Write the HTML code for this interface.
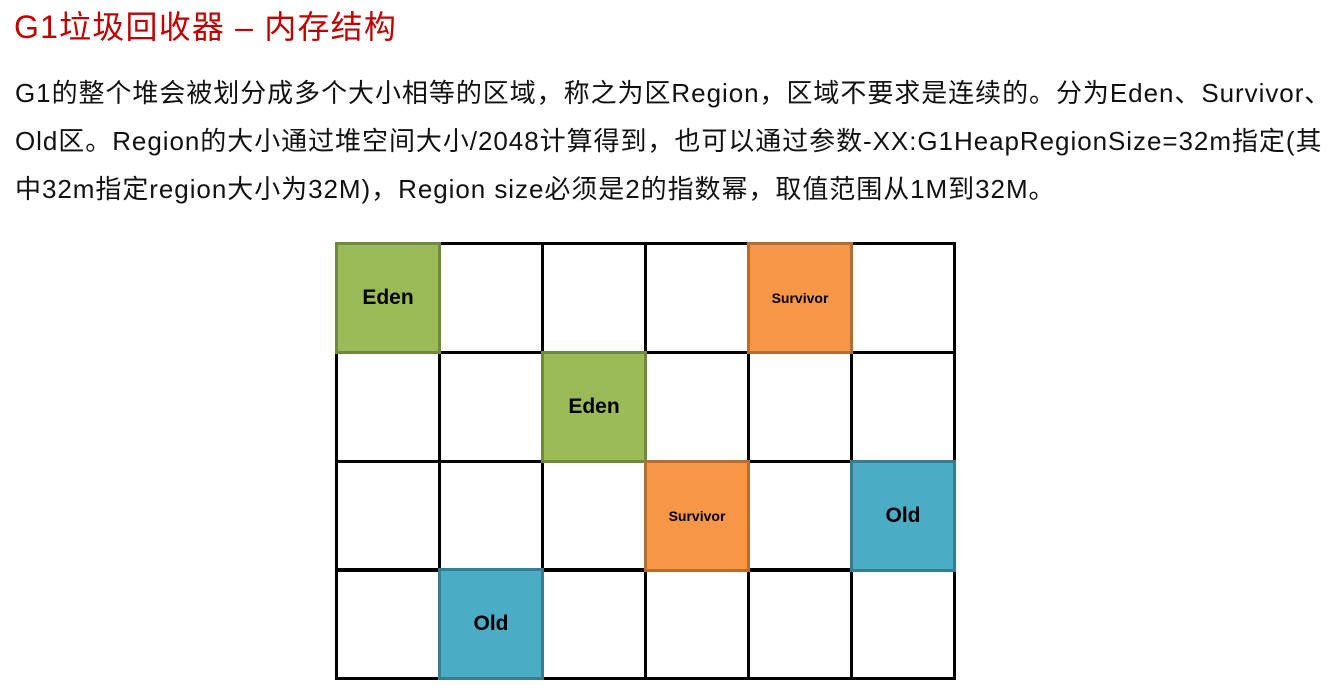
<!DOCTYPE html>
<html><head><meta charset="utf-8"><style>
body{margin:0;width:1341px;height:700px;background:#fff;position:relative;overflow:hidden;font-family:"Liberation Sans","Noto Sans CJK SC",sans-serif}
.t{position:absolute;left:14px;top:2px;font-size:32px;color:#c00000;white-space:nowrap;letter-spacing:1.2px}
.p{position:absolute;left:15px;font-size:26px;color:#111;white-space:nowrap;line-height:30px;letter-spacing:0.95px}
.c{position:absolute;box-sizing:border-box;width:106px;height:112px;border:3px solid #000;display:flex;align-items:center;justify-content:center;font-weight:bold;font-size:21px;color:#000}
.e{background:#9bbb59;border-color:#71893f}
.s{background:#f79646;border-color:#b66d31;font-size:14px}
.o{background:#4bacc6;border-color:#357d91}
</style></head><body>
<div class="t">G1垃圾回收器 – 内存结构</div>
<div class="p" style="top:78px">G1的整个堆会被划分成多个大小相等的区域，称之为区Region，区域不要求是连续的。分为Eden、Survivor、</div>
<div class="p" style="top:126px">Old区。Region的大小通过堆空间大小/2048计算得到，也可以通过参数-XX:G1HeapRegionSize=32m指定(其</div>
<div class="p" style="top:174px">中32m指定region大小为32M)，Region size必须是2的指数幂，取值范围从1M到32M。</div>
<div id="g"></div>
<script>
var xs=[335,438,541,644,747,850],ys=[242,351,460,568];
var sp={"0,0":["e","Eden"],"0,4":["s","Survivor"],"1,2":["e","Eden"],"2,3":["s","Survivor"],"2,5":["o","Old"],"3,1":["o","Old"]};
var h="";
for(var r=0;r<4;r++)for(var c=0;c<6;c++){var k=sp[r+","+c];if(!k)h+='<div class="c" style="left:'+xs[c]+'px;top:'+ys[r]+'px"></div>';}
for(var r=0;r<4;r++)for(var c=0;c<6;c++){var k=sp[r+","+c];if(k)h+='<div class="c '+k[0]+'" style="left:'+xs[c]+'px;top:'+ys[r]+'px">'+k[1]+'</div>';}
document.getElementById("g").innerHTML=h;
</script>
</body></html>
